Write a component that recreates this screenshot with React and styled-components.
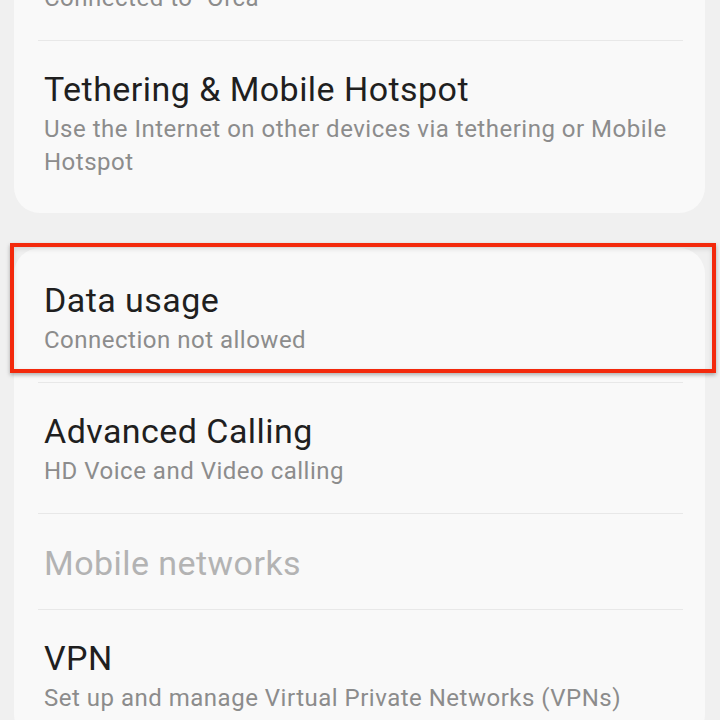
import React from "react";
import styled, { createGlobalStyle } from "styled-components";

const Global = createGlobalStyle`
  html, body { margin: 0; padding: 0; background: #f0f0f0; }
  body { font-family: Roboto, "Noto Sans", "Liberation Sans", sans-serif; overflow: hidden; }
`;

const Page = styled.div`
  width: 720px;
  height: 720px;
  overflow: hidden;
  background: #f0f0f0;
`;

const List = styled.div`
  display: flex;
  flex-direction: column;
  gap: 35px;
  margin-top: -95px;
  padding: 0 15px 0 14px;
`;

const Card = styled.div`
  position: relative;
  background: #f9f9f9;
  border-radius: 26px;
  padding: ${(p) => (p.$last ? "3px 0 0" : "4px 0 9px")};
`;

const Row = styled.div`
  position: relative;
  display: flex;
  flex-direction: column;
  padding: ${(p) => (p.$single ? "29px 30px 25px" : "28px 30px 25px")};
  ${(p) =>
    p.$divider &&
    `
    &::before {
      content: "";
      position: absolute;
      top: 0;
      left: 24px;
      right: 22px;
      height: 1px;
      background: #e8e8e8;
    }
  `}
`;

const Title = styled.div`
  font-size: 34px;
  line-height: 42px;
  letter-spacing: 0.45px;
  color: ${(p) => (p.$disabled ? "#b3b3b3" : "#1f1f1f")};
`;

const Sub = styled.div`
  margin-top: 3px;
  font-size: 24px;
  line-height: 33px;
  letter-spacing: 0.5px;
  color: #8c8c8c;
`;

const Highlight = styled.div`
  position: absolute;
  top: -5px;
  left: -4px;
  width: 706px;
  height: 130px;
  box-sizing: border-box;
  border: 4px solid #f3290c;
  box-shadow: 0 2px 4px rgba(0, 0, 0, 0.3), inset 0 2px 5px rgba(0, 0, 0, 0.12);
  pointer-events: none;
`;

export default function App() {
  return (
    <Page>
      <Global />
      <List>
        <Card>
          <Row>
            <Title>Wi-Fi</Title>
            <Sub>Connected to "Orca"</Sub>
          </Row>
          <Row $divider>
            <Title>Tethering &amp; Mobile Hotspot</Title>
            <Sub>Use the Internet on other devices via tethering or Mobile Hotspot</Sub>
          </Row>
        </Card>
        <Card $last>
          <Highlight />
          <Row>
            <Title>Data usage</Title>
            <Sub>Connection not allowed</Sub>
          </Row>
          <Row $divider>
            <Title>Advanced Calling</Title>
            <Sub>HD Voice and Video calling</Sub>
          </Row>
          <Row $divider $single>
            <Title $disabled>Mobile networks</Title>
          </Row>
          <Row $divider>
            <Title>VPN</Title>
            <Sub>Set up and manage Virtual Private Networks (VPNs)</Sub>
          </Row>
        </Card>
      </List>
    </Page>
  );
}
